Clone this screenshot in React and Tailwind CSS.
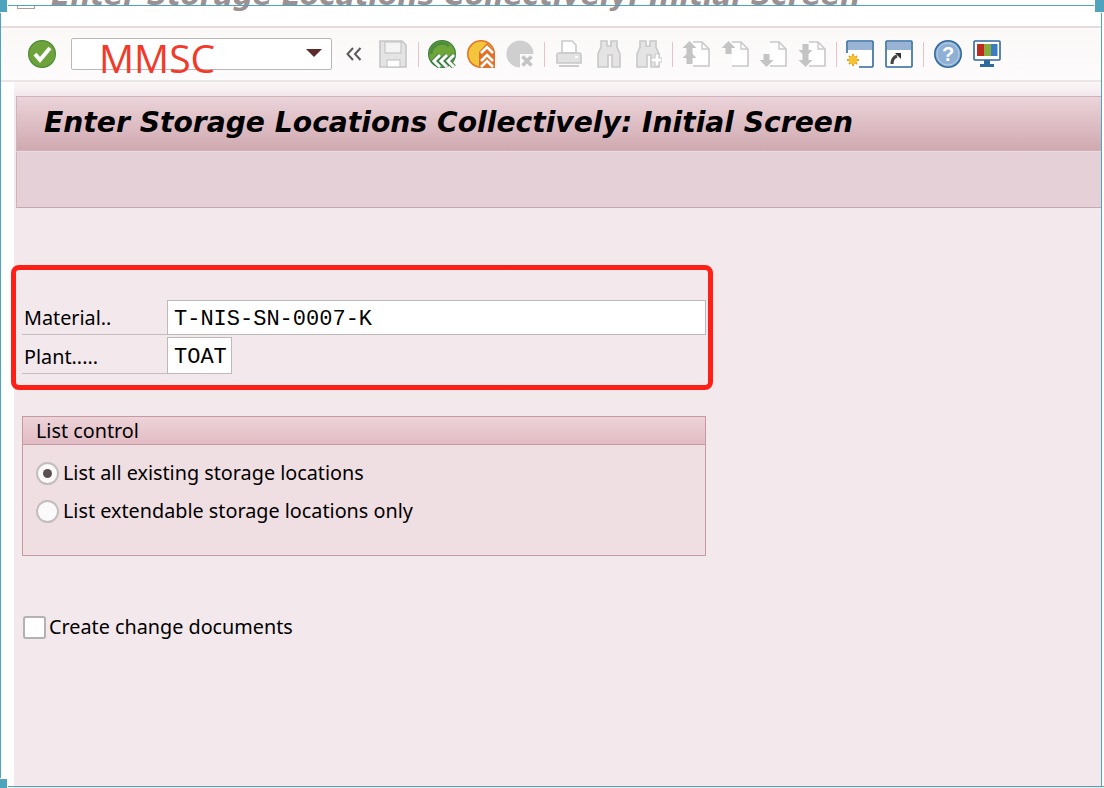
import React from 'react';

const TAHOMA = "font-['Noto_Sans',sans-serif]";
const TITLE_FONT = "font-['DejaVu_Sans',sans-serif]";

function Sep({ className = '' }) {
  return <div className={`w-px h-[25px] bg-[#e6c3ca] shrink-0 ${className}`} />;
}

// small svg wrapper for the 28px toolbar icons
function Icon({ className = '', children }) {
  return (
    <svg viewBox="0 0 28 28" className={`w-[28px] h-[28px] shrink-0 ${className}`}>
      {children}
    </svg>
  );
}

const DocPage = ({ children }) => (
  <Icon>
    <path d="M11 2h9l7 7v17H11" fill="#fff" stroke="#c9c9c9" strokeWidth="1.6" />
    <path d="M20 2v7h7" fill="none" stroke="#c9c9c9" strokeWidth="1.4" />
    {children}
  </Icon>
);

const UP = 'M7.5 1l7 7h-4v6h-6V8h-4z';
const DOWN = 'M7.5 27l7-7h-4v-6h-6v6h-4z';

function Binoculars({ plus }) {
  return (
    <Icon>
      <path d="M6 1h6v5h4V1h6v6l3 7v13h-8V15h-4v12H3V14l3-7z" fill="#e4e4e4" stroke="#c9c9c9" strokeWidth="1.6" />
      {plus && <path d="M17 18h4v-4h4v4h3v4h-3v4h-4v-4h-4z" fill="#fff" stroke="#c9c9c9" strokeWidth="1.2" />}
    </Icon>
  );
}

function Toolbar() {
  return (
    <div className="h-[56px] border-t-2 border-b-2 border-t-[#e6dcdd] border-b-[#ebe6e5] bg-gradient-to-b from-[#fbf8f8] to-[#fdfbfb] flex items-center pl-[27px]">
      <Icon>
        <circle cx="14" cy="14" r="13.4" fill="#6ea33c" stroke="#4f8a3a" strokeWidth="1.2" />
        <path d="M7 14l5 6 10-12" fill="none" stroke="#fff" strokeWidth="4" />
      </Icon>
      <div className="relative ml-[15px] w-[261px] h-[32px] border border-[#b8b8b8] rounded-[2px] bg-white shrink-0">
        <span className="absolute left-[27px] top-[-1px] text-[39px] leading-[40px] text-[#f23a2a] font-['Open_Sans',sans-serif] whitespace-nowrap">MMSC</span>
        <div className="absolute left-[234px] top-[10px] w-0 h-0 border-x-[8px] border-x-transparent border-t-[8px] border-t-[#5d2b2b]" />
      </div>
      <svg viewBox="0 0 16 14" className="ml-[14px] w-[16px] h-[14px] shrink-0">
        <path d="M7 1L1.5 7 7 13M14.5 1L9 7l5.5 6" fill="none" stroke="#5a5a5a" strokeWidth="2" />
      </svg>
      <Icon className="ml-[17px]">
        <path d="M1 1h22l4 4v22H1z" fill="#e4e4e4" stroke="#c6c6c6" strokeWidth="1.6" />
        <rect x="6" y="2" width="16" height="11" fill="#f4f4f4" stroke="#c6c6c6" strokeWidth="1.2" />
        <rect x="8" y="20" width="13" height="7" fill="#fff" stroke="#c6c6c6" strokeWidth="1.2" />
      </Icon>
      <Sep className="ml-[11px]" />
      <Icon className="ml-[9px]">
        <circle cx="14" cy="14" r="13.4" fill="#6fa63a" stroke="#3f7f44" strokeWidth="1.2" />
        <path d="M3 14a11 11 0 0 1 18-8" fill="none" stroke="#4d8c3b" strokeWidth="3" />
        <path d="M12 15l-6 6 6 6M19 15l-6 6 6 6M26 15l-6 6 6 6" fill="none" stroke="#3f7f44" strokeWidth="5" />
        <path d="M12 15l-6 6 6 6M19 15l-6 6 6 6M26 15l-6 6 6 6" fill="none" stroke="#fff" strokeWidth="3" />
      </Icon>
      <Icon className="ml-[11px]">
        <circle cx="14" cy="14" r="13.2" fill="#f3c53a" stroke="#e0762a" strokeWidth="1.6" />
        <path d="M20 3l8 9v16H12V12z" fill="#e0702a" />
        <path d="M14 13l6-6 6 6M14 21l6-6 6 6M14 27l6-6 6 6" fill="none" stroke="#fff" strokeWidth="2.6" />
      </Icon>
      <Icon className="ml-[11px]">
        <circle cx="14" cy="14" r="13.6" fill="#cfcfcf" />
        <rect x="14" y="14" width="14" height="14" fill="#fbf9f9" />
        <path d="M16.5 16.5l9 9M25.5 16.5l-9 9" stroke="#c4c4c4" strokeWidth="3.6" />
      </Icon>
      <Sep className="ml-[10px]" />
      <Icon className="ml-[10px]">
        <path d="M7 1h10l4 4v8H7z" fill="#fff" stroke="#cacaca" strokeWidth="1.6" />
        <path d="M2 15q0-2 2-2h20q2 0 2 2v8H2z" fill="#e2e2e2" stroke="#c8c8c8" strokeWidth="1.6" />
        <rect x="4" y="25" width="20" height="2" fill="#cdcdcd" />
        <rect x="20" y="16" width="3" height="2" fill="#fff" />
      </Icon>
      <div className="ml-[12px]"><Binoculars /></div>
      <div className="ml-[11px]"><Binoculars plus /></div>
      <Sep className="ml-[10px]" />
      <div className="ml-[9px]">
        <DocPage>
          <path d={UP} fill="#c4c4c4" />
          <path d={UP} fill="#c4c4c4" transform="translate(0 10)" />
        </DocPage>
      </div>
      <div className="ml-[11px]">
        <DocPage><path d={UP} fill="#c4c4c4" /></DocPage>
      </div>
      <div className="ml-[10px]">
        <DocPage><path d={DOWN} fill="#c4c4c4" /></DocPage>
      </div>
      <div className="ml-[11px]">
        <DocPage>
          <path d={DOWN} fill="#c4c4c4" />
          <path d={DOWN} fill="#c4c4c4" transform="translate(0 -10)" />
        </DocPage>
      </div>
      <Sep className="ml-[10px]" />
      <Icon className="ml-[9px]">
        <rect x="1" y="1" width="26" height="26" rx="1" fill="#fff" stroke="#2f6a9e" strokeWidth="1.6" />
        <rect x="2" y="2" width="24" height="8" fill="#98b3d3" />
        <rect x="0" y="13" width="13" height="15" fill="#fff" />
        <g stroke="#f09a2a" strokeWidth="2">
          <path d="M7 14v12M1 20h12M3 16l8 8M11 16l-8 8" />
        </g>
        <circle cx="7" cy="20" r="4.2" fill="#f4c430" />
      </Icon>
      <Icon className="ml-[11px]">
        <rect x="1" y="1" width="26" height="26" rx="1" fill="#fff" stroke="#2f6a9e" strokeWidth="1.6" />
        <rect x="2" y="2" width="24" height="8" fill="#98b3d3" />
        <path d="M7 24c0-5 2-7 5-8" fill="none" stroke="#444" strokeWidth="3" />
        <path d="M10 13h6v6z" fill="#333" />
      </Icon>
      <Sep className="ml-[10px]" />
      <Icon className="ml-[10px]">
        <circle cx="14" cy="14" r="13.2" fill="#8fb0d4" stroke="#2f6a9e" strokeWidth="1.6" />
        <circle cx="14" cy="14" r="11" fill="none" stroke="#b8cde3" strokeWidth="1" />
        <text x="14" y="21" textAnchor="middle" fontSize="20" fontWeight="700" fill="#fff" fontFamily="Liberation Sans, sans-serif">?</text>
      </Icon>
      <Icon className="ml-[11px]">
        <rect x="1" y="1" width="26" height="19" rx="1" fill="#fff" stroke="#2f6a9e" strokeWidth="1.6" />
        <rect x="4" y="4" width="7" height="12" fill="#bf2a1e" />
        <rect x="11" y="4" width="7" height="12" fill="#86ad3c" />
        <rect x="18" y="4" width="6.5" height="12" fill="#3a7cc0" />
        <path d="M11 20h6v4h-6z" fill="#2f6a9e" />
        <rect x="7" y="24" width="14" height="3" fill="#2f6a9e" />
      </Icon>
    </div>
  );
}

function Radio({ checked, label }) {
  return (
    <div className="flex items-center h-[24px]">
      <div className="w-[23px] h-[23px] rounded-full bg-[#fbfafa] border-2 border-[#c2bebe] flex items-center justify-center shrink-0">
        {checked && <div className="w-[9px] h-[9px] rounded-full bg-[#5b4f4f]" />}
      </div>
      <span className={`ml-[4px] text-[19.8px] text-black whitespace-nowrap ${TAHOMA}`}>{label}</span>
    </div>
  );
}

function FieldRow({ label, value, inputWidth, height }) {
  return (
    <div className="flex">
      <div className={`w-[145px] ${height} border-b border-[#c4bcbe] pl-[2px] pb-[1px] flex items-end text-[19.8px] text-black ${TAHOMA}`}>{label}</div>
      <div className={`${inputWidth} ${height} bg-white border border-[#bdb9b9] pl-[6px] pt-[3px] flex items-center text-[22px] text-black font-['Liberation_Mono',monospace]`}>{value}</div>
    </div>
  );
}

export default function App() {
  return (
    <div className="relative w-[1104px] h-[788px] overflow-hidden bg-white flex flex-col pl-px pr-[2px]">
      {/* window caption, cut off by the capture */}
      <div className="h-[26px] pt-[5px] shrink-0 overflow-hidden flex">
        <div className="ml-[16px] w-[18px] h-[4px] border-x border-b border-[#a89c9c] shrink-0" />
        <div className={`ml-[16px] -mt-[25px] text-[28.2px] leading-[32px] font-bold italic text-[#9b9192] whitespace-nowrap ${TITLE_FONT}`}>
          Enter Storage Locations Collectively: Initial Screen
        </div>
      </div>

      <Toolbar />

      <div className="flex-1 ml-[13px] pt-[14px] bg-gradient-to-b from-[#fbf7f7] from-0% to-[#f3e8ec] to-[2%] bg-[#f3e8ec] flex flex-col">
        <div className="ml-[2px] h-[55px] border border-[#cfb3b8] border-r-0 bg-gradient-to-b from-[#ebd4da] to-[#d0a9b0] pl-[27px] flex items-center">
          <span className={`text-[28.2px] font-bold italic text-black whitespace-nowrap ${TITLE_FONT}`}>
            Enter Storage Locations Collectively: Initial Screen
          </span>
        </div>
        <div className="ml-[2px] h-[57px] border-l border-b border-t border-t-[#ecd9dd] border-l-[#cfb3b8] border-b-[#c6a9ae] bg-[#e4d0d6]" />

        {/* the red frame is part of the picture */}
        <div className="mt-[57px] -ml-[3px] w-[702px] h-[125px] border-[5px] border-[#fe2016] rounded-[8px] pl-[6px] pt-[30px]">
          <FieldRow label="Material.." value="T-NIS-SN-0007-K" inputWidth="w-[539px]" height="h-[35px]" />
          <div className="h-[2px]" />
          <FieldRow label="Plant....." value="TOAT" inputWidth="w-[65px]" height="h-[37px]" />
        </div>

        <div className="mt-[26px] ml-[8px] w-[684px] h-[140px] border border-[#c69aa2] bg-[#efdfe3] flex flex-col">
          <div className={`h-[28px] border-b border-[#c69aa2] bg-gradient-to-b from-[#edd3d9] to-[#e2bcc4] pl-[13px] flex items-center text-[19.8px] text-black ${TAHOMA}`}>
            List control
          </div>
          <div className="pl-[13px] pt-[16px] flex flex-col gap-[14px]">
            <Radio checked label="List all existing storage locations" />
            <Radio label="List extendable storage locations only" />
          </div>
        </div>

        <div className="mt-[59px] ml-[9px] flex items-center h-[24px]">
          <div className="w-[23px] h-[23px] rounded-[3px] bg-white border-2 border-[#b4b1b1] shrink-0" />
          <span className={`ml-[3px] text-[19.8px] text-black whitespace-nowrap ${TAHOMA}`}>Create change documents</span>
        </div>
      </div>

      {/* selection frame and handles from the capture tool */}
      <div className="absolute left-[8px] right-[10px] top-[5px] h-px bg-[#4ea3bd]" />
      <div className="absolute left-[8px] right-0 bottom-[1px] h-px bg-[#4ea3bd]" />
      <div className="absolute left-0 top-[13px] bottom-[10px] w-px bg-[#4ea3bd]" />
      <div className="absolute right-[2px] top-[13px] bottom-[2px] w-px bg-[#4ea3bd]" />
      <div className="absolute left-0 top-0 w-[7px] h-[12px] bg-[#4ea3bd]" />
      <div className="absolute right-0 top-0 w-[9px] h-[12px] bg-[#4ea3bd]" />
      <div className="absolute left-0 bottom-0 w-[7px] h-[9px] bg-[#4ea3bd]" />
    </div>
  );
}
